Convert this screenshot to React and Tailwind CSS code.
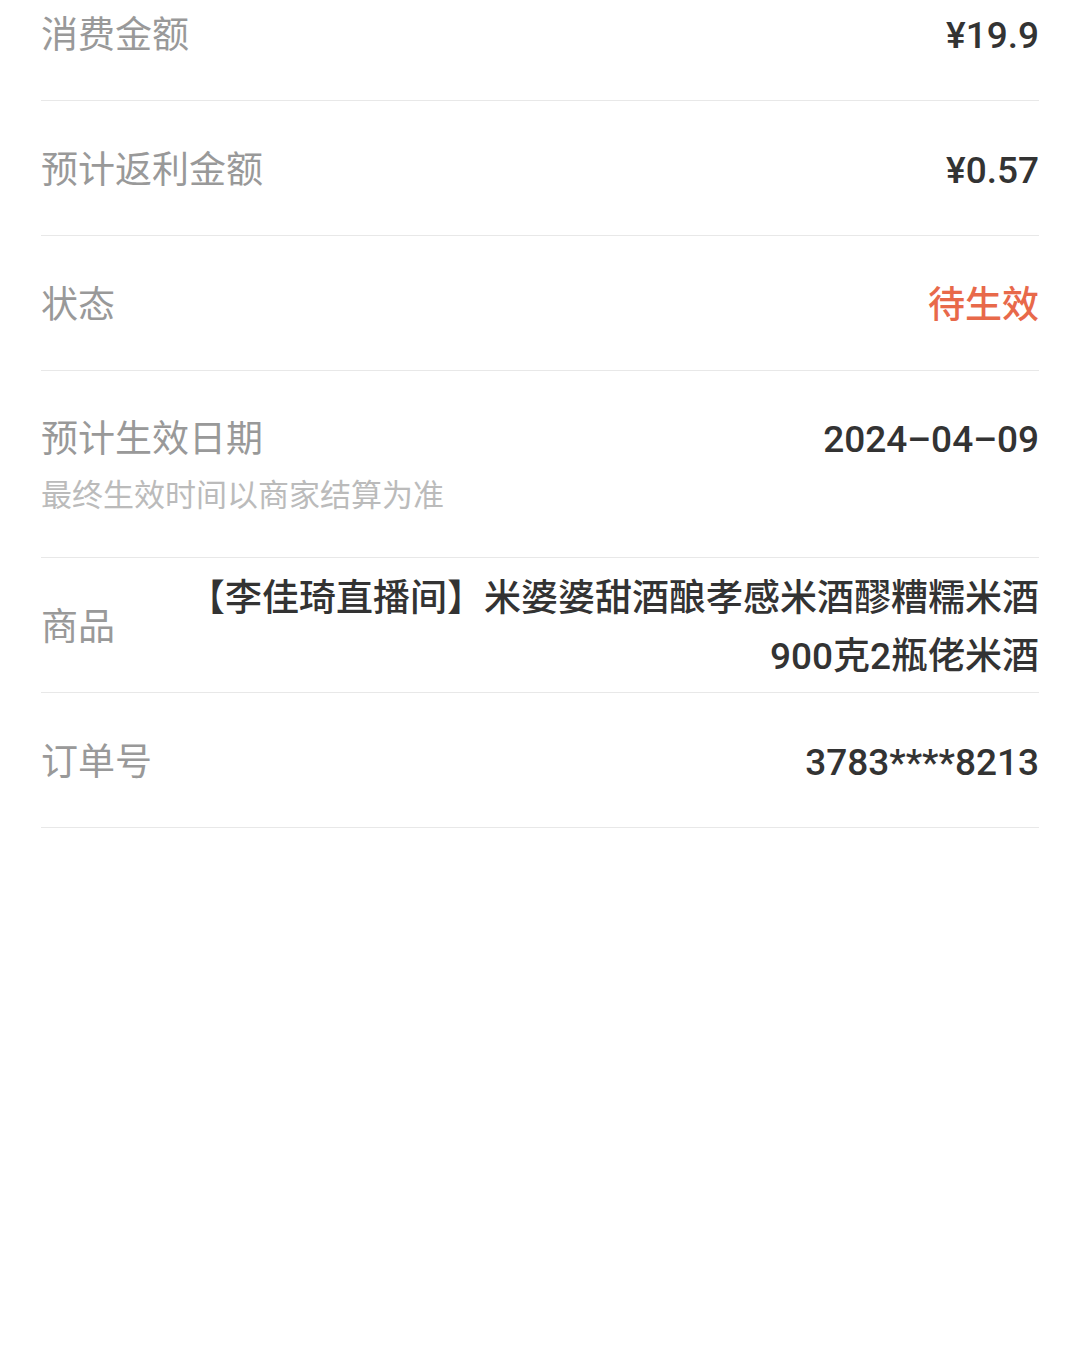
export default function App() {
  const font = { fontFamily: "Roboto, 'Noto Sans CJK SC', sans-serif" };
  const Row = ({ label, children }) => (
    <div className="flex items-center justify-between h-[135px] pt-[6px] border-b border-[#e8e8e8]">
      <div className="shrink-0 text-[37px] leading-[48px] text-[#999999]">{label}</div>
      {children}
    </div>
  );
  const val = "text-[37px] leading-[48px] text-[#333333] font-medium";
  return (
    <div className="w-[1080px] h-[1350px] bg-white overflow-hidden" style={font}>
      <div className="px-[41px] -mt-[34px]">
        <Row label="消费金额">
          <div className={val}>¥19.9</div>
        </Row>
        <Row label="预计返利金额">
          <div className={val}>¥0.57</div>
        </Row>
        <Row label="状态">
          <div className="text-[37px] leading-[48px] text-[#e8694a] font-medium">待生效</div>
        </Row>
        <div className="flex items-start justify-between border-b border-[#e8e8e8] pt-[45px] pb-[40px]">
          <div className="flex flex-col gap-[11px]">
            <div className="text-[37px] leading-[48px] text-[#999999]">预计生效日期</div>
            <div className="text-[31px] leading-[42px] text-[#bbbbbb]">最终生效时间以商家结算为准</div>
          </div>
          <div className={val}>2024–04–09</div>
        </div>
        <Row label="商品">
          <div className="flex-1 min-w-0 ml-[44px] text-right text-[37px] leading-[58px] text-[#333333] font-medium">
            <span className="-ml-[12px]">【</span>李佳琦直播间】米婆婆甜酒酿孝感米酒醪糟糯米酒900克2瓶佬米酒
          </div>
        </Row>
        <Row label="订单号">
          <div className={val}>3783****8213</div>
        </Row>
      </div>
    </div>
  );
}
